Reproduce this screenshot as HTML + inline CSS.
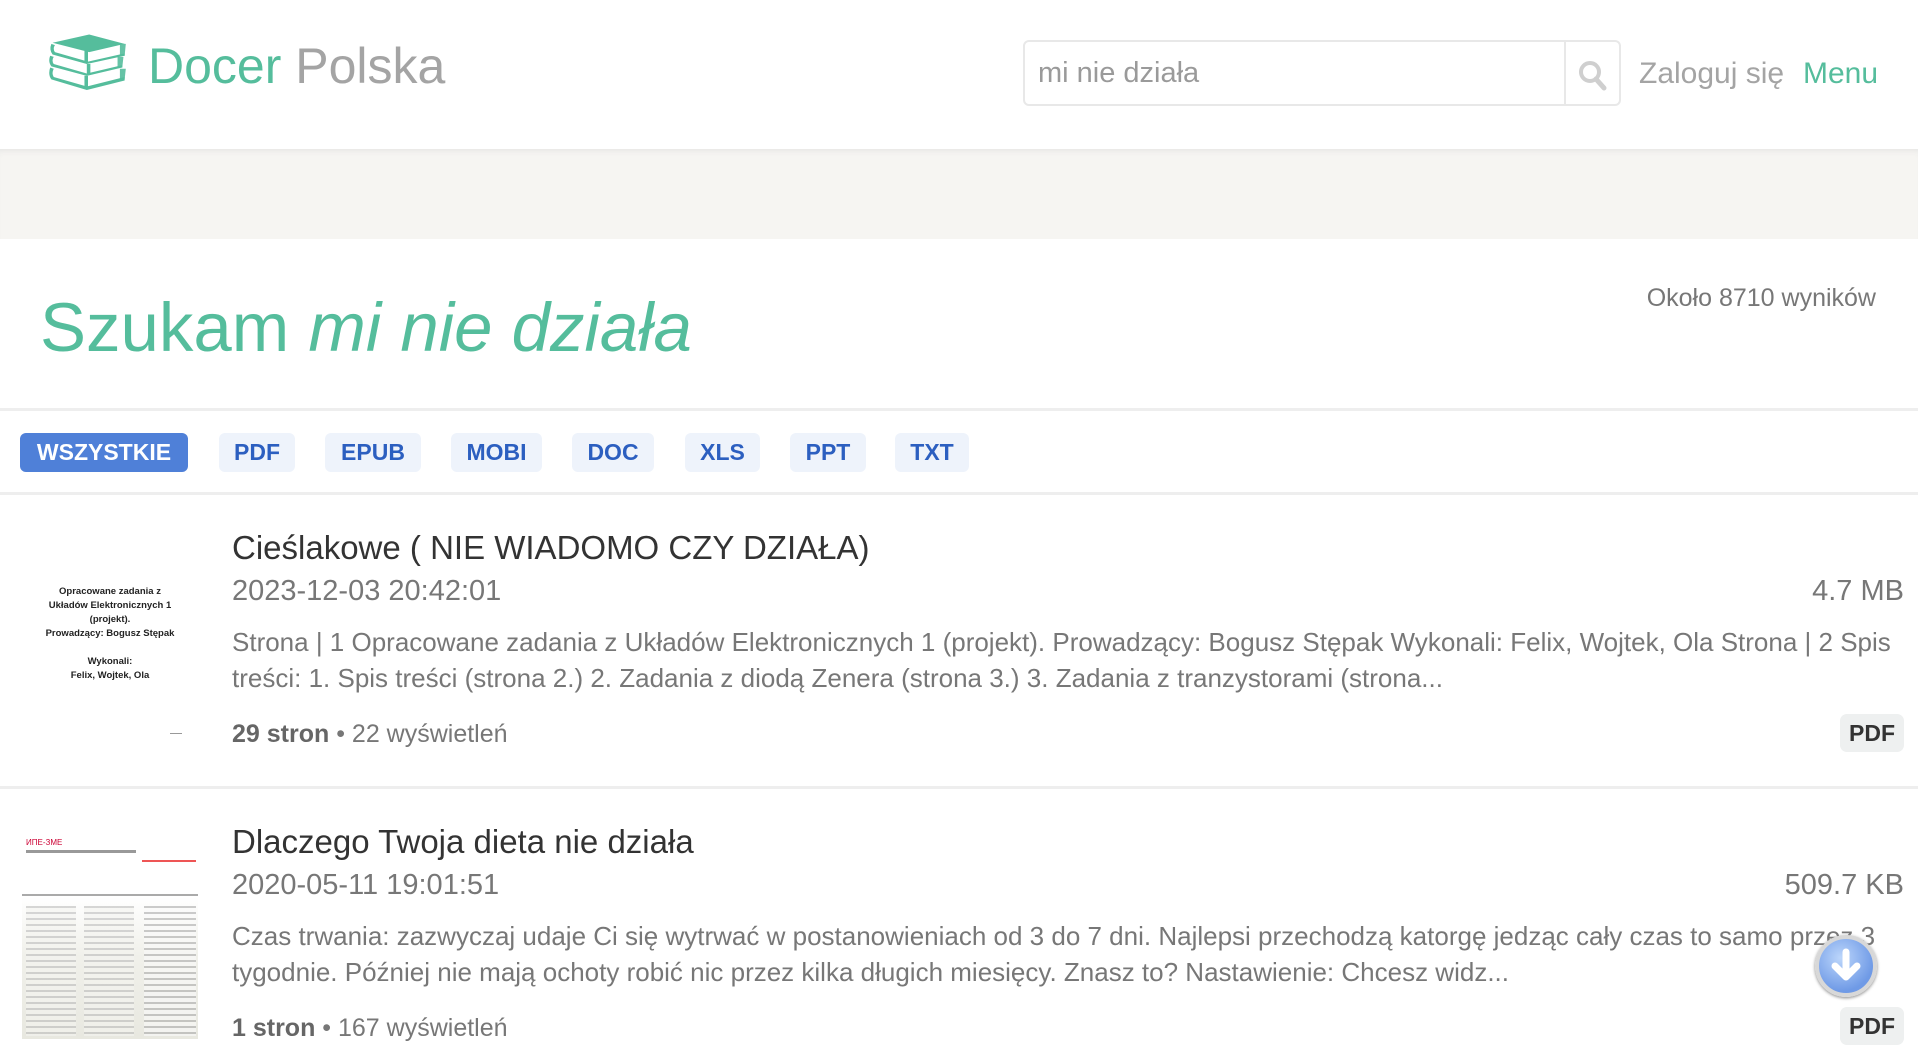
<!DOCTYPE html>
<html><head><meta charset="utf-8"><style>
*{margin:0;padding:0;box-sizing:border-box}
body{width:1918px;height:1039px;overflow:hidden;background:#fff;font-family:"Liberation Sans",sans-serif;position:relative}
.a{position:absolute;white-space:nowrap}
.hdr{position:absolute;left:0;top:0;width:1918px;height:149px;background:#fff}
.band{position:absolute;left:0;top:149px;width:1918px;height:90px;background:#f6f5f2;box-shadow:inset 0 6px 8px -6px #ddd}
.hr{position:absolute;left:0;width:1918px;height:3px;background:#eeeeee}
.pill{position:absolute;top:433px;height:39px;border-radius:6px;background:#eef3fb;color:#2c5fc0;font-weight:bold;font-size:23px;line-height:39px;text-align:center}
.pill.on{background:#4f80d8;color:#fff}
.t{font-size:33px;color:#333}
.d{font-size:29px;color:#777}
.p{font-size:26px;color:#777;line-height:36px;white-space:normal;width:1690px}
.m{font-size:25px;color:#777}
.m b{color:#666}
.badge{position:absolute;left:1840px;width:64px;height:38px;border-radius:7px;background:#eef0f0;color:#333;font-weight:bold;font-size:23px;line-height:38px;text-align:center}
</style></head><body>
<div class="hdr"></div>
<svg class="a" style="left:49px;top:33px" width="78" height="62" viewBox="0 0 66 52">
<g fill="#55bd9c">
<path d="M3 8 L34 1 L64 9 L34 16 Z"/>
<path d="M2 9 Q0 14 3 18 L32 26 L64 19 L64 17 L33 24 L5 16 Q3 13 5 10 Z"/>
<path d="M1 19 Q-1 24 2 28 L32 36 L62 29 L62 27 L32 34 L4 26 Q2 23 4 20 Z"/>
<path d="M1 29 Q-1 35 2 39 L32 48 L64 40 L64 37 L32 45 L4 37 Q2 34 4 30 Z"/>
<rect x="30" y="15" width="3" height="10"/><rect x="32" y="26" width="3" height="9"/><rect x="30" y="36" width="3" height="11"/>
<path d="M60 9 L65 9 L64 19 L60 19 Z M58 20 L63 20 L62 29 L58 29 Z M60 30 L65 30 L64 39 L60 39 Z" opacity=".9"/>
</g></svg>
<div class="a" style="left:148px;top:37px;font-size:50px;color:#55bd9c">Docer <span style="color:#a4a4a4">Polska</span></div>
<div class="a" style="left:1023px;top:40px;width:598px;height:66px;border:2px solid #e8e8e8;border-radius:6px"></div>
<div class="a" style="left:1564px;top:41px;width:2px;height:64px;background:#e8e8e8"></div>
<div class="a" style="left:1038px;top:57px;font-size:29px;color:#9a9a9a">mi nie działa</div>
<svg class="a" style="left:1577px;top:59px" width="32" height="32" viewBox="0 0 32 32"><circle cx="13" cy="13" r="9" fill="none" stroke="#cfcfcf" stroke-width="4"/><path d="M19 20 L27 29" stroke="#cfcfcf" stroke-width="5" stroke-linecap="round"/></svg>
<div class="a" style="left:1639px;top:57px;font-size:30px;color:#a4a4a4">Zaloguj się</div>
<div class="a" style="left:1803px;top:57px;font-size:30px;color:#55bd9c">Menu</div>
<div class="band"></div>
<div class="a" style="left:40px;top:288px;font-size:69px;color:#55bd9c">Szukam <i>mi nie działa</i></div>
<div class="a" style="right:42px;top:284px;font-size:25px;color:#777">Około 8710 wyników</div>
<div class="hr" style="top:408px"></div>
<div class="pill on" style="left:20px;width:168px">WSZYSTKIE</div>
<div class="pill" style="left:219px;width:76px">PDF</div>
<div class="pill" style="left:325px;width:96px">EPUB</div>
<div class="pill" style="left:451px;width:91px">MOBI</div>
<div class="pill" style="left:572px;width:82px">DOC</div>
<div class="pill" style="left:685px;width:75px">XLS</div>
<div class="pill" style="left:790px;width:76px">PPT</div>
<div class="pill" style="left:895px;width:74px">TXT</div>
<div class="hr" style="top:492px"></div>

<div class="a" style="left:44px;top:585px;width:132px;text-align:center;font-size:9.5px;line-height:14px;color:#222;font-weight:bold;white-space:normal">Opracowane zadania z Układów Elektronicznych 1 (projekt).<br>Prowadzący: Bogusz Stępak<br><br>Wykonali:<br>Felix, Wojtek, Ola</div>
<div class="a" style="left:170px;top:733px;width:12px;height:1px;background:#999"></div>
<div class="a t" style="left:232px;top:529px">Cieślakowe ( NIE WIADOMO CZY DZIAŁA)</div>
<div class="a d" style="left:232px;top:575px">2023-12-03 20:42:01</div>
<div class="a d" style="right:14px;top:575px">4.7 MB</div>
<div class="a p" style="left:232px;top:624px">Strona | 1 Opracowane zadania z Układów Elektronicznych 1 (projekt). Prowadzący: Bogusz Stępak Wykonali: Felix, Wojtek, Ola Strona | 2 Spis treści: 1. Spis treści (strona 2.) 2. Zadania z diodą Zenera (strona 3.) 3. Zadania z tranzystorami (strona...</div>
<div class="a m" style="left:232px;top:720px"><b>29 stron</b> • 22 wyświetleń</div>
<div class="badge" style="top:714px">PDF</div>
<div class="hr" style="top:786px"></div>

<div class="a" style="left:22px;top:836px;width:176px;height:203px;background:linear-gradient(180deg,#fff 0,#fff 30%,#f0f0ea 60%,#e8e8e0 100%)">
<div style="position:absolute;left:4px;top:2px;font-size:8px;color:#c03">ИПЕ-ЗМЕ</div>
<div style="position:absolute;left:4px;top:14px;width:110px;height:3px;background:#999"></div>
<div style="position:absolute;left:0;top:58px;width:176px;height:2px;background:#aaa"></div>
<div style="position:absolute;left:120px;top:24px;width:54px;height:2px;background:#e55"></div>
<div style="position:absolute;left:4px;top:70px;width:50px;height:130px;background:repeating-linear-gradient(180deg,#bbb 0 2px,#f4f4f0 2px 6px);opacity:.6"></div>
<div style="position:absolute;left:62px;top:70px;width:50px;height:130px;background:repeating-linear-gradient(180deg,#bbb 0 2px,#f4f4f0 2px 6px);opacity:.6"></div>
<div style="position:absolute;left:122px;top:70px;width:52px;height:130px;background:repeating-linear-gradient(180deg,#aaa 0 2px,#fafafa 2px 6px);opacity:.6"></div>
</div>
<div class="a t" style="left:232px;top:823px">Dlaczego Twoja dieta nie działa</div>
<div class="a d" style="left:232px;top:869px">2020-05-11 19:01:51</div>
<div class="a d" style="right:14px;top:869px">509.7 KB</div>
<div class="a p" style="left:232px;top:918px">Czas trwania: zazwyczaj udaje Ci się wytrwać w postanowieniach od 3 do 7 dni. Najlepsi przechodzą katorgę jedząc cały czas to samo przez 3 tygodnie. Później nie mają ochoty robić nic przez kilka długich miesięcy. Znasz to? Nastawienie: Chcesz widz...</div>
<div class="a m" style="left:232px;top:1014px"><b>1 stron</b> • 167 wyświetleń</div>
<div class="badge" style="top:1007px">PDF</div>
<div class="a" style="left:1815px;top:935px;width:62px;height:62px;border-radius:50%;background:radial-gradient(circle at 40% 35%,#bcd6fb,#6f9ae6 70%);border:4px solid #d8d8d8;box-shadow:0 1px 3px #888"></div>
<svg class="a" style="left:1826px;top:946px" width="40" height="40" viewBox="0 0 40 40"><path d="M20 6 V30 M9 20 L20 31 L31 20" fill="none" stroke="#fff" stroke-width="7" stroke-linecap="round" stroke-linejoin="round"/></svg>
</body></html>
